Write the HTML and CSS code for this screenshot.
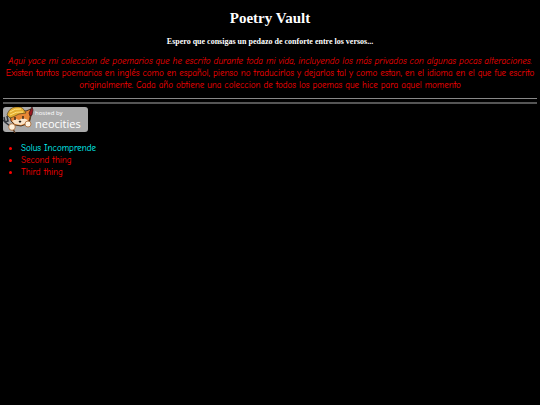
FILE: index.html
```html
<!DOCTYPE html>
<html lang="es">
<head>
<meta charset="utf-8">
<title>Poetry Vault</title>
<link rel="stylesheet" href="styles.css">
</head>
<body>
<h1>Poetry Vault</h1>
<h2>Espero que consigas un pedazo de conforte entre los versos...</h2>
<p class="intro"><em>Aqui yace mi coleccion de poemarios que he escrito durante toda mi vida, incluyendo los más privados con algunas pocas alteraciones.</em><br>
Existen tantos poemarios en inglés como en español, pienso no traducirlos y dejarlos tal y como estan, en el idioma en el que fue escrito
originalmente. Cada año obtiene una coleccion de todos los poemas que hice para aquel momento</p>
<hr>
<hr class="thick">
<a class="badge" href="#">
<svg class="cat" viewBox="0 0 32 26" aria-hidden="true">
<path d="M7 7l1 7 4 4 6 1 6-2 3-5 1-10-5 2-8-1-6 2z" fill="#e88735" stroke="#30200e" stroke-width=".8"/>
<path d="M9 14l4-2 3 1 4-2 5 2-2 3-5 2-6-1z" fill="#f8e3c8"/>
<path d="M4 8Q6 1 12 0q7-1 9 3l2 3-7 1-6 3-3 1z" fill="#e5af32" stroke="#59431a" stroke-width=".7"/>
<path d="M7 5q5-4 11-3M7 8q6-4 13-3" fill="none" stroke="#ffe27c"/>
<path d="M12 10v3m8-4v3m-4 2 1 1 1-1" fill="none" stroke="#241b13" stroke-width="1.3"/>
<path d="M1 10l1 5 5 4M4 9l1 5-3 1M0 13l2 2" fill="none" stroke="#30343a" stroke-width="1.5"/>
<path d="M28 8l-2 8m-16 6 2 4" stroke="#59371d" stroke-width="1.4"/>
<path d="M29 0l1 3-1 5-2 1-1-3z" fill="#9b1720" stroke="#301516" stroke-width=".7"/>
<circle cx="9" cy="20" r="3.3" fill="#fff1dc" stroke="#a56430" stroke-width=".8"/>
<circle cx="25" cy="17" r="3" fill="#fff1dc" stroke="#a56430" stroke-width=".8"/>
</svg>
<span class="words"><span class="host">hosted by</span><span class="brand">neocities</span></span>
</a>
<ul>
<li><a href="#">Solus Incomprende</a></li>
<li>Second thing</li>
<li>Third thing</li>
</ul>
</body>
</html>
```
FILE: styles.css
```css
body {
  margin: 0;
  padding: 9px 3px;
  background: #000;
  color: #f00;
  font: 9px/12px "Comic Sans MS", "Comic Neue", cursive;
}
h1, h2 {
  margin: 0;
  color: #fff;
  text-align: center;
  font-family: "Liberation Serif", serif;
}
h1 { font-size: 15px; line-height: 18px; }
h2 { margin-top: 10px; font-size: 8px; line-height: 10px; }
.intro { margin: 8px 0 7px; text-align: center; }
hr { height: 1px; margin: 0 0 3px; border: 0; background: #888; }
.thick { height: 2px; background: #555; }
.badge {
  display: flex;
  width: 85px;
  height: 25px;
  border-radius: 3px;
  background: #aaa;
  color: #fff;
  text-decoration: none;
}
.cat { flex: none; width: 32px; height: 26px; }
.words { display: flex; flex-direction: column; padding-top: 3px; }
.host { font: 6px/6px "Open Sans", sans-serif; }
.brand { font: 11px/15px "Open Sans", sans-serif; }
ul { margin: 10px 0 0; padding-left: 18px; }
li a { color: #0ff; text-decoration: none; }
```
